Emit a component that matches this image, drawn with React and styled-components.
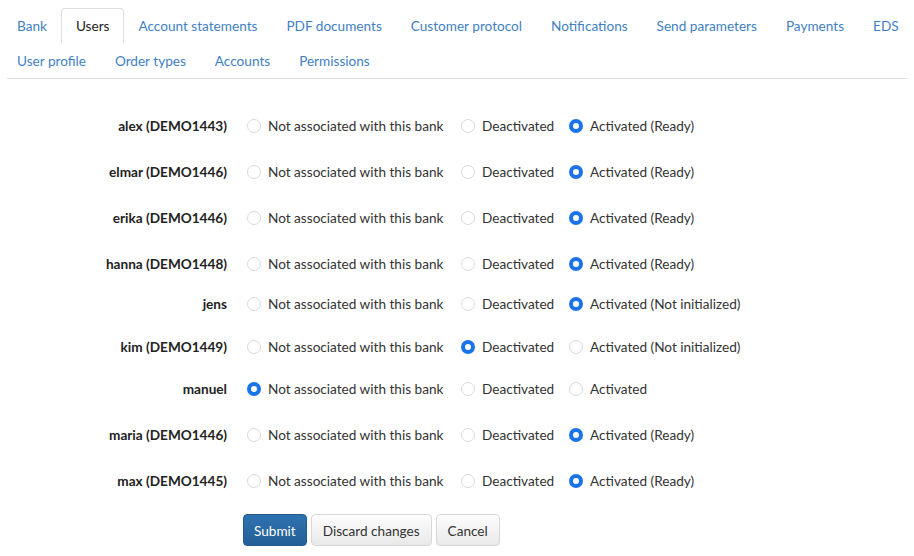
import React, { useState } from "react";
import styled, { createGlobalStyle } from "styled-components";

const GlobalStyle = createGlobalStyle`
  body {
    margin: 0;
    background: #fff;
    font-family: Lato, "Open Sans", "Liberation Sans", sans-serif;
    font-size: 13.6px;
    color: #333;
  }
`;

const tabRows = [
  ["Bank", "Users", "Account statements", "PDF documents", "Customer protocol", "Notifications", "Send parameters", "Payments", "EDS"],
  ["User profile", "Order types", "Accounts", "Permissions"],
];

const users = [
  { name: "alex (DEMO1443)", value: "ready", shift: 0 },
  { name: "elmar (DEMO1446)", value: "ready", shift: 0 },
  { name: "erika (DEMO1446)", value: "ready", shift: 0 },
  { name: "hanna (DEMO1448)", value: "ready", shift: 0 },
  { name: "jens", value: "ready", shift: -6, pending: true },
  { name: "kim (DEMO1449)", value: "off", shift: -3, pending: true },
  { name: "manuel", value: "none", shift: -4, bare: true },
  { name: "maria (DEMO1446)", value: "ready", shift: 0 },
  { name: "max (DEMO1445)", value: "ready", shift: 0 },
];

function activatedLabel(user) {
  if (user.bare) return "Activated";
  if (user.pending) return "Activated (Not initialized)";
  return "Activated (Ready)";
}

function App() {
  const [values, setValues] = useState(() => users.map((u) => u.value));

  const handleChange = (index, value) => {
    setValues((prev) => prev.map((v, i) => (i === index ? value : v)));
  };

  return (
    <Page>
      <GlobalStyle />
      <Nav>
        {tabRows.map((row, r) => (
          <TabRow key={r}>
            {row.map((tab) => (
              <Tab key={tab} active={tab === "Users"}>
                {tab}
              </Tab>
            ))}
          </TabRow>
        ))}
      </Nav>

      <Form>
        {users.map((user, i) => (
          <UserRow key={user.name} shift={user.shift}>
            <UserName>{user.name}</UserName>
            <Option>
              <Radio
                type="radio"
                name={"u" + i}
                checked={values[i] === "none"}
                onChange={() => handleChange(i, "none")}
              />
              Not associated with this bank
            </Option>
            <Option>
              <Radio
                type="radio"
                name={"u" + i}
                checked={values[i] === "off"}
                onChange={() => handleChange(i, "off")}
              />
              Deactivated
            </Option>
            <Option>
              <Radio
                type="radio"
                name={"u" + i}
                checked={values[i] === "ready"}
                onChange={() => handleChange(i, "ready")}
              />
              {activatedLabel(user)}
            </Option>
          </UserRow>
        ))}

        <Actions>
          <Button primary>Submit</Button>
          <Button>Discard changes</Button>
          <Button>Cancel</Button>
        </Actions>
      </Form>
    </Page>
  );
}

export default App;

const Page = styled.div`
  padding: 8px 7px 0;
`;

const Nav = styled.div`
  border-bottom: 1px solid #dddde2;
`;

const TabRow = styled.div`
  display: flex;
  margin-left: -4.5px;
`;

const Tab = styled.a`
  display: block;
  height: 35px;
  line-height: 34px;
  padding: 0 13.5px 1px;
  box-sizing: border-box;
  color: ${(props) => (props.active ? "#222" : "#3f7fc4")};
  background: #fff;
  border: 1px solid ${(props) => (props.active ? "#dedee3" : "transparent")};
  border-bottom: none;
  border-radius: 4px 4px 0 0;
  cursor: pointer;
  white-space: nowrap;

  &:hover {
    color: #245a94;
  }
`;

const Form = styled.div`
  padding-top: 24px;
`;

const UserRow = styled.div`
  display: grid;
  grid-template-columns: 240px 214px 108px auto;
  align-items: center;
  height: 46px;
  margin-top: ${(props) => props.shift}px;
`;

const UserName = styled.div`
  padding-right: 20px;
  text-align: right;
  font-weight: 700;
  color: #222;
`;

const Option = styled.label`
  display: flex;
  align-items: center;
  gap: 7px;
  white-space: nowrap;
  color: #333;
`;

const Radio = styled.input`
  appearance: none;
  margin: 0;
  width: 14px;
  height: 14px;
  border-radius: 50%;
  border: 1px solid #d9d9de;
  background: #fff;
  box-sizing: border-box;
  flex-shrink: 0;

  &:checked {
    border: 4px solid #1a73e8;
  }
`;

const Actions = styled.div`
  display: flex;
  gap: 4px;
  margin: 10px 0 0 236px;
`;

const Button = styled.button`
  height: 32px;
  padding: 2px ${(props) => (props.primary ? "10px" : "11px")} 0;
  font-family: inherit;
  font-size: 13.6px;
  border-radius: 4px;
  cursor: pointer;
  color: ${(props) => (props.primary ? "#fff" : "#333")};
  border: 1px solid ${(props) => (props.primary ? "#245a8d" : "#d8d8d8")};
  background: ${(props) =>
    props.primary
      ? "linear-gradient(#2f72b0, #245e97)"
      : "linear-gradient(#fdfdfd, #e9e9e9)"};
`;
